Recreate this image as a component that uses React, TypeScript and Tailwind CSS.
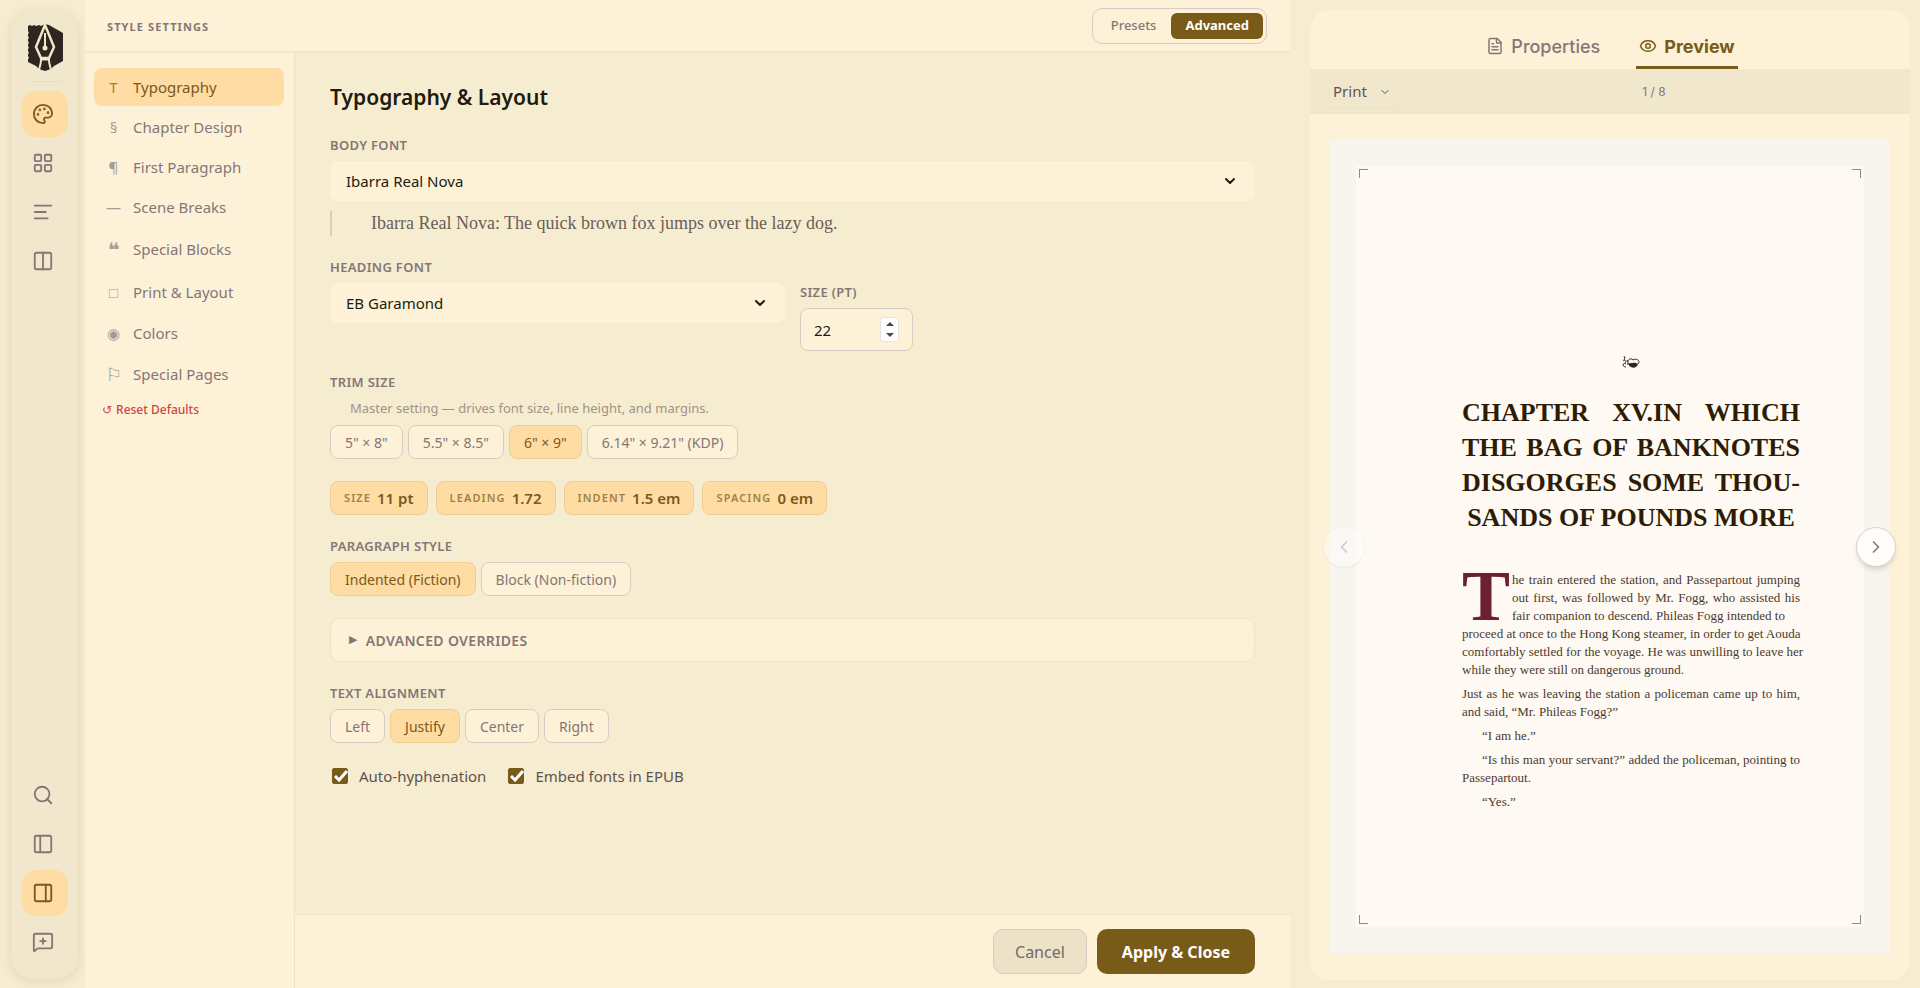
import { useState } from "react";
import {
  AlignLeft,
  ChevronDown,
  ChevronLeft,
  ChevronRight,
  Columns2,
  Eye,
  FileText,
  LayoutGrid,
  MessageSquarePlus,
  Palette,
  PanelLeft,
  PanelRight,
  Search,
  type LucideIcon,
} from "lucide-react";

const SECTIONS = [
  { glyph: "T", label: "Typography", row: "h-[38px]", font: "" },
  { glyph: "§", label: "Chapter Design", row: "h-[38px]", font: "" },
  { glyph: "¶", label: "First Paragraph", row: "h-[38px]", font: "" },
  { glyph: "—", label: "Scene Breaks", row: "h-[38px]", font: "" },
  { glyph: "❝", label: "Special Blocks", row: "h-[43px]", font: "font-['DejaVu_Sans',sans-serif] text-[20px] font-bold" },
  { glyph: "□", label: "Print & Layout", row: "h-[39px]", font: "" },
  { glyph: "◉", label: "Colors", row: "h-[39px]", font: "" },
  { glyph: "⚐", label: "Special Pages", row: "h-[39px]", font: "font-['DejaVu_Sans',sans-serif] text-[18px]" },
];

const TRIM_SIZES = ['5" × 8"', '5.5" × 8.5"', '6" × 9"', '6.14" × 9.21" (KDP)'];
const PARAGRAPH_STYLES = ["Indented (Fiction)", "Block (Non-fiction)"];
const ALIGNMENTS = ["Left", "Justify", "Center", "Right"];

const METRICS = [
  { label: "Size", value: "11 pt" },
  { label: "Leading", value: "1.72" },
  { label: "Indent", value: "1.5 em" },
  { label: "Spacing", value: "0 em" },
];

function RailButton({ icon: Icon, label, active }: { icon: LucideIcon; label: string; active?: boolean }) {
  return (
    <button
      type="button"
      aria-label={label}
      className={`flex size-[46px] items-center justify-center rounded-[14px] pr-1 ${
        active ? "bg-[#ffdca4] text-[#785a19]" : "text-[#857676]"
      }`}
    >
      <Icon size={22} strokeWidth={2} />
    </button>
  );
}

function Logo() {
  return (
    <svg viewBox="0 0 36 48" className="h-12 w-9" aria-hidden="true">
      <path
        d="M1 2 3 1 5 2 7 1 9 2 12 1 14 2 18 0 22 1 36 9V37L27 42 24 45 18 47 12 45 9 42 1 38V35L2 34 1 32V30L2 29 1 27V25L2 24 1 22V20L2 19 1 17V15L2 14 1 12V10L2 9 1 7Z"
        fill="#30261f"
      />
      <path d="M18 1 9 23 14 34H22L27 23Z" fill="#30261f" stroke="#f1e7cd" strokeWidth="2.500" />
      <path d="M14 36C14 40 13 41 12 46M22 36C22 40 23 41 24 46" fill="none" stroke="#f1e7cd" strokeWidth="2" />
      <path d="M13 35H23" stroke="#f1e7cd" strokeWidth="3" />
      <path d="M17 9H19V24H17Z" fill="#f1e7cd" />
      <circle cx="18" cy="24" r="2.500" fill="#f1e7cd" />
    </svg>
  );
}

function Rail() {
  return (
    <nav className="mt-[11px] mr-[7px] mb-[9px] ml-[11px] flex w-[67px] flex-col items-center rounded-[22px] bg-[#f1e7cd] pt-[13px] pb-3.5 shadow-[0_2px_12px_rgba(120,90,25,0.16)]">
      <Logo />
      <div className="mt-[9px] mb-[9px] h-px w-[34px] bg-[#e8dec5]" />
      <div className="flex flex-col gap-[3px]">
        <RailButton icon={Palette} label="Style" active />
        <RailButton icon={LayoutGrid} label="Library" />
        <RailButton icon={AlignLeft} label="Outline" />
        <RailButton icon={Columns2} label="Split view" />
      </div>
      <div className="mt-auto flex flex-col gap-[3px]">
        <RailButton icon={Search} label="Search" />
        <RailButton icon={PanelLeft} label="Left panel" />
        <RailButton icon={PanelRight} label="Right panel" active />
        <RailButton icon={MessageSquarePlus} label="Add comment" />
      </div>
    </nav>
  );
}

function FieldLabel({ children, htmlFor }: { children: string; htmlFor?: string }) {
  const className = "block text-[13px] leading-[18px] font-semibold tracking-wide text-[#857676] uppercase";
  return htmlFor ? (
    <label htmlFor={htmlFor} className={className}>
      {children}
    </label>
  ) : (
    <p className={className}>{children}</p>
  );
}

function OptionGroup({ options, value, onChange }: { options: string[]; value: string; onChange: (v: string) => void }) {
  return (
    <div className="flex flex-wrap gap-[5px]">
      {options.map((o) => (
        <button
          key={o}
          type="button"
          onClick={() => onChange(o)}
          className={`h-[34px] rounded-lg border px-3.5 text-[14px] ${
            o === value
              ? "border-[#efcd93] bg-[#ffdca4] text-[#785a19]"
              : "border-[#d9cbc4] bg-[#fdf2d8] text-[#857676]"
          }`}
        >
          {o}
        </button>
      ))}
    </div>
  );
}

function FontSelect({ id, value }: { id: string; value: string }) {
  return (
    <div className="relative">
      <select
        id={id}
        defaultValue={value}
        className="h-10 w-full appearance-none rounded-lg bg-[#fdf2d8] px-4 text-[15px] text-[#1f1b10]"
      >
        <option>{value}</option>
      </select>
      <ChevronDown
        size={16}
        strokeWidth={3}
        className="pointer-events-none absolute top-3 right-[17px] text-[#1f1b10]"
      />
    </div>
  );
}

function CheckOption({ label }: { label: string }) {
  const [checked, setChecked] = useState(true);
  return (
    <label className="flex items-center gap-[11px] text-[15px] text-[#5f5350]">
      <span className="relative flex size-4">
        <input
          type="checkbox"
          checked={checked}
          onChange={(e) => setChecked(e.target.checked)}
          className="size-4 appearance-none rounded-[2px] border border-[#785a19] checked:bg-[#785a19]"
        />
        {checked && (
          <svg viewBox="0 0 16 16" className="pointer-events-none absolute inset-0 size-4" aria-hidden="true">
            <path d="M3 8 7 12 15 3" fill="none" stroke="#fff" strokeWidth="3" />
          </svg>
        )}
      </span>
      {label}
    </label>
  );
}

function SettingsForm() {
  const [trim, setTrim] = useState(TRIM_SIZES[2]);
  const [style, setStyle] = useState(PARAGRAPH_STYLES[0]);
  const [align, setAlign] = useState(ALIGNMENTS[1]);
  const [size, setSize] = useState("22");

  return (
    <div className="flex-1 overflow-hidden px-[35px] pt-[30px]">
      <h1 className="text-[21px] leading-7 font-semibold text-[#1f1b10]">Typography &amp; Layout</h1>

      <div className="mt-[25px]">
        <FieldLabel htmlFor="body-font">Body Font</FieldLabel>
        <div className="mt-[7px]">
          <FontSelect id="body-font" value="Ibarra Real Nova" />
        </div>
        <p className="mt-2.5 border-l-2 border-[#d9cbc4] pl-[39px] font-['Liberation_Serif',serif] text-[18px] leading-[25px] text-[#6b5d59]">
          Ibarra Real Nova: The quick brown fox jumps over the lazy dog.
        </p>
      </div>

      <div className="mt-[22px] flex gap-[15px]">
        <div className="w-[455px]">
          <FieldLabel htmlFor="heading-font">Heading Font</FieldLabel>
          <div className="mt-[7px]">
            <FontSelect id="heading-font" value="EB Garamond" />
          </div>
        </div>
        <div className="pt-[25px]">
          <FieldLabel htmlFor="heading-size">Size (pt)</FieldLabel>
          <div className="relative mt-[7px] w-[113px]">
            <input
              id="heading-size"
              inputMode="numeric"
              value={size}
              onChange={(e) => setSize(e.target.value)}
              className="h-[43px] w-full rounded-lg border border-[#d9cbc4] bg-[#fdf2d8] pl-[13px] text-[15px] text-[#1f1b10]"
            />
            <div className="absolute top-[9px] right-3.5 flex h-[25px] w-[19px] flex-col rounded-[3px] border border-[#e8e4dc] bg-white">
              <button
                type="button"
                aria-label="Increase"
                onClick={() => setSize(String(Number(size) + 1))}
                className="flex flex-1 items-center justify-center"
              >
                <svg viewBox="0 0 8 4" className="h-1 w-2">
                  <path d="M0 4 4 0 8 4Z" fill="#45494c" />
                </svg>
              </button>
              <button
                type="button"
                aria-label="Decrease"
                onClick={() => setSize(String(Number(size) - 1))}
                className="flex flex-1 items-center justify-center"
              >
                <svg viewBox="0 0 8 4" className="h-1 w-2">
                  <path d="M0 0 4 4 8 0Z" fill="#45494c" />
                </svg>
              </button>
            </div>
          </div>
        </div>
      </div>

      <div className="mt-[22px]">
        <FieldLabel>Trim Size</FieldLabel>
        <p className="mt-2 mb-2 pl-5 text-[13px] leading-[18px] text-[#a39189]">
          Master setting — drives font size, line height, and margins.
        </p>
        <OptionGroup options={TRIM_SIZES} value={trim} onChange={setTrim} />
      </div>

      <div className="mt-[22px] flex gap-2">
        {METRICS.map((m) => (
          <div
            key={m.label}
            className="flex h-[34px] items-center gap-1.5 rounded-lg border border-[#efcd93] bg-[#ffdca4] px-[13px] text-[#785a19]"
          >
            <span className="text-[11px] font-semibold tracking-widest uppercase opacity-70">{m.label}</span>
            <span className="text-[15px] font-semibold">{m.value}</span>
          </div>
        ))}
      </div>

      <div className="mt-[22px]">
        <FieldLabel>Paragraph Style</FieldLabel>
        <div className="mt-[7px]">
          <OptionGroup options={PARAGRAPH_STYLES} value={style} onChange={setStyle} />
        </div>
      </div>

      <details className="mt-[22px] rounded-[10px] border border-[#efe4c8] bg-[#fdf2d8]">
        <summary className="flex h-[42px] cursor-pointer items-center gap-2 px-[18px] text-[14px] font-semibold tracking-wide text-[#857676] uppercase">
          <span className="font-['DejaVu_Sans',sans-serif] text-[11px]">▶</span>
          Advanced Overrides
        </summary>
      </details>

      <div className="mt-[22px]">
        <FieldLabel>Text Alignment</FieldLabel>
        <div className="mt-[7px]">
          <OptionGroup options={ALIGNMENTS} value={align} onChange={setAlign} />
        </div>
      </div>

      <div className="mt-[22px] flex gap-[22px] pl-0.5">
        <CheckOption label="Auto-hyphenation" />
        <CheckOption label="Embed fonts in EPUB" />
      </div>
    </div>
  );
}

function StylePanel() {
  const [section, setSection] = useState("Typography");
  return (
    <section className="flex min-w-0 flex-1 flex-col bg-[#fdf2d8]">
      <header className="flex h-[53px] items-center justify-between border-b-2 border-[#f1e7cd] pr-[23px] pl-[22px]">
        <h2 className="pt-1 text-[11px] font-bold tracking-widest text-[#857676] uppercase">Style Settings</h2>
        <div className="flex h-9 items-center rounded-[10px] border border-[#d9cbc4] p-[3px] text-[13px]">
          <button type="button" className="h-[26px] px-[15px] font-medium text-[#857676]">
            Presets
          </button>
          <button type="button" className="h-[26px] rounded-md bg-[#785a19] px-3.5 font-bold text-white">
            Advanced
          </button>
        </div>
      </header>

      <div className="flex min-h-0 flex-1">
        <aside className="flex w-[210px] shrink-0 flex-col border-r border-[#eee3c6] pt-[15px] pr-2.5 pl-[9px]">
          <div className="flex flex-col gap-0.5">
            {SECTIONS.map((s) => (
              <button
                key={s.label}
                type="button"
                onClick={() => setSection(s.label)}
                className={`flex items-center rounded-lg pl-[11px] text-left text-[15px] ${s.row} ${
                  s.label === section ? "bg-[#ffdca4] text-[#785a19]" : "text-[#857676]"
                }`}
              >
                <span className={`mr-[11px] w-[17px] text-center opacity-70 ${s.font}`}>{s.glyph}</span>
                {s.label}
              </button>
            ))}
          </div>
          <button
            type="button"
            className="mt-[7px] flex items-center gap-1 self-start pl-2 text-[12px] font-medium text-[#cf4444]"
          >
            <span className="font-['DejaVu_Sans',sans-serif]">↺</span>
            Reset Defaults
          </button>
        </aside>

        <div className="flex min-w-0 flex-1 flex-col bg-[#f6edd0]">
          <SettingsForm />
          <footer className="flex h-[74px] items-center justify-end gap-2.5 border-t border-[#efe4c8] bg-[#fdf2d8] pr-[35px]">
            <button
              type="button"
              className="h-[45px] rounded-[10px] border border-[#d9cbc4] bg-[#ece2c8] px-[21px] text-[16px] text-[#766863]"
            >
              Cancel
            </button>
            <button type="button" className="h-[45px] rounded-[10px] bg-[#785a19] px-[25px] text-[16px] font-bold text-white">
              Apply &amp; Close
            </button>
          </footer>
        </div>
      </div>
    </section>
  );
}

// Each entry is one typeset line; "full" lines are stretched to the measure.
type Line = { text: string; full?: boolean };

const HEADING: Line[] = [
  { text: "CHAPTER XV.IN WHICH", full: true },
  { text: "THE BAG OF BANKNOTES", full: true },
  { text: "DISGORGES SOME THOU-", full: true },
  { text: "SANDS OF POUNDS MORE" },
];

const OPENING: Line[] = [
  { text: "he train entered the station, and Passepartout jumping", full: true },
  { text: "out first, was followed by Mr. Fogg, who assisted his", full: true },
  { text: "fair companion to descend. Phileas Fogg intended to" },
];

const OPENING_REST: Line[] = [
  { text: "proceed at once to the Hong Kong steamer, in order to get Aouda", full: true },
  { text: "comfortably settled for the voyage. He was unwilling to leave her", full: true },
  { text: "while they were still on dangerous ground." },
];

const PARAGRAPHS: { indent?: boolean; lines: Line[] }[] = [
  {
    lines: [
      { text: "Just as he was leaving the station a policeman came up to him,", full: true },
      { text: "and said, “Mr. Phileas Fogg?”" },
    ],
  },
  { indent: true, lines: [{ text: "“I am he.”" }] },
  {
    indent: true,
    lines: [{ text: "“Is this man your servant?” added the policeman, pointing to", full: true }, { text: "Passepartout." }],
  },
  { indent: true, lines: [{ text: "“Yes.”" }] },
];

function Lines({ lines, indent }: { lines: Line[]; indent?: boolean }) {
  return lines.map((l, i) => (
    <span
      key={l.text}
      className={`block whitespace-nowrap ${l.full ? "[text-align-last:justify]" : ""} ${indent && i === 0 ? "pl-5" : ""}`}
    >
      {l.text}
    </span>
  ));
}

function Ornament() {
  return (
    <svg viewBox="0 0 18 12" className="mx-auto h-3 w-[18px]" aria-hidden="true">
      <path d="M2 0 3 2 2 4M1 5C3 3 5 5 3 7M4 8C0 6 0 11 4 11M5 4 6 6" fill="none" stroke="#30261f" />
      <path d="M6 9C5 4 8 1 11 4 M11 4C14 2 17 4 17 6s-2 3-4 2" fill="none" stroke="#30261f" />
      <path d="M6 7c3 1 6-2 10 1-1 5-9 5-10-1Z" fill="#30261f" />
    </svg>
  );
}

function BookPage() {
  return (
    <article className="relative h-full bg-[#fef9f2] pt-[190px] pr-16 pl-[106px] font-['Liberation_Serif',serif] text-[#4a3a30]">
      <span className="absolute top-[3px] left-[3px] size-[9px] border-t border-l border-[#8f8b86]" />
      <span className="absolute top-[3px] right-[3px] size-[9px] border-t border-r border-[#8f8b86]" />
      <span className="absolute bottom-[3px] left-[3px] size-[9px] border-b border-l border-[#8f8b86]" />
      <span className="absolute right-[3px] bottom-[3px] size-[9px] border-r border-b border-[#8f8b86]" />
      <Ornament />
      <h3 className="mt-[27px] text-center text-[26px] leading-[35px] font-bold text-[#2e1c05]">
        <Lines lines={HEADING} />
      </h3>
      <div className="mt-9 text-[13px] leading-[18px]">
        <div className="flex">
          <span className="h-[54px] w-[50px] shrink-0 text-[72px] leading-[50px] font-bold text-[#6b2036]">T</span>
          <p className="flex-1">
            <Lines lines={OPENING} />
          </p>
        </div>
        <p>
          <Lines lines={OPENING_REST} />
        </p>
        {PARAGRAPHS.map((p) => (
          <p key={p.lines[0].text} className="mt-1.5">
            <Lines lines={p.lines} indent={p.indent} />
          </p>
        ))}
      </div>
    </article>
  );
}

function PreviewPanel() {
  return (
    <section className="relative mt-2.5 mr-2.5 mb-2 ml-5 flex w-[600px] shrink-0 flex-col rounded-[20px] bg-[#fdf2d8]">
      <div className="flex h-[59px] items-end justify-center gap-8 font-[Inter,sans-serif] text-[18px]">
        <button
          type="button"
          className="flex h-[43px] items-center gap-[7px] border-b-3 border-transparent px-1 font-medium text-[#857676]"
        >
          <FileText size={18} strokeWidth={2} />
          Properties
        </button>
        <button
          type="button"
          className="flex h-[43px] items-center gap-[7px] border-b-3 border-[#785a19] px-[3px] font-bold text-[#785a19]"
        >
          <Eye size={18} strokeWidth={2} />
          Preview
        </button>
      </div>

      <div className="flex h-[45px] items-center bg-[#f1e7cd] px-2">
        <button
          type="button"
          className="flex h-[30px] items-center gap-3 rounded-2xl px-[15px] text-[15px] text-[#5f5350] shadow-[0_1px_2px_rgba(120,90,25,0.04)]"
        >
          Print
          <ChevronDown size={12} />
        </button>
        <span className="flex-1 text-center font-[Inter,sans-serif] text-[12px] text-[#857676]">1 / 8</span>
      </div>

      <div className="mx-5 mt-[26px] mb-[27px] min-h-0 flex-1 bg-[#f8f5ee] p-[26px]">
        <BookPage />
      </div>

      <button
        type="button"
        aria-label="Previous page"
        className="absolute top-[517px] left-3.5 flex size-10 items-center justify-center rounded-full bg-white/40 text-[#cfcac3] shadow-sm shadow-black/5"
      >
        <ChevronLeft size={20} />
      </button>
      <button
        type="button"
        aria-label="Next page"
        className="absolute top-[517px] right-3.5 flex size-10 items-center justify-center rounded-full border border-[#ddd0cc] bg-[#fffdf9] text-[#857b78] shadow-md"
      >
        <ChevronRight size={20} />
      </button>
    </section>
  );
}

export default function App() {
  return (
    <main className="flex h-screen min-w-[1400px] bg-[#f6edd0] font-['Noto_Sans',sans-serif]">
      <Rail />
      <StylePanel />
      <PreviewPanel />
    </main>
  );
}
